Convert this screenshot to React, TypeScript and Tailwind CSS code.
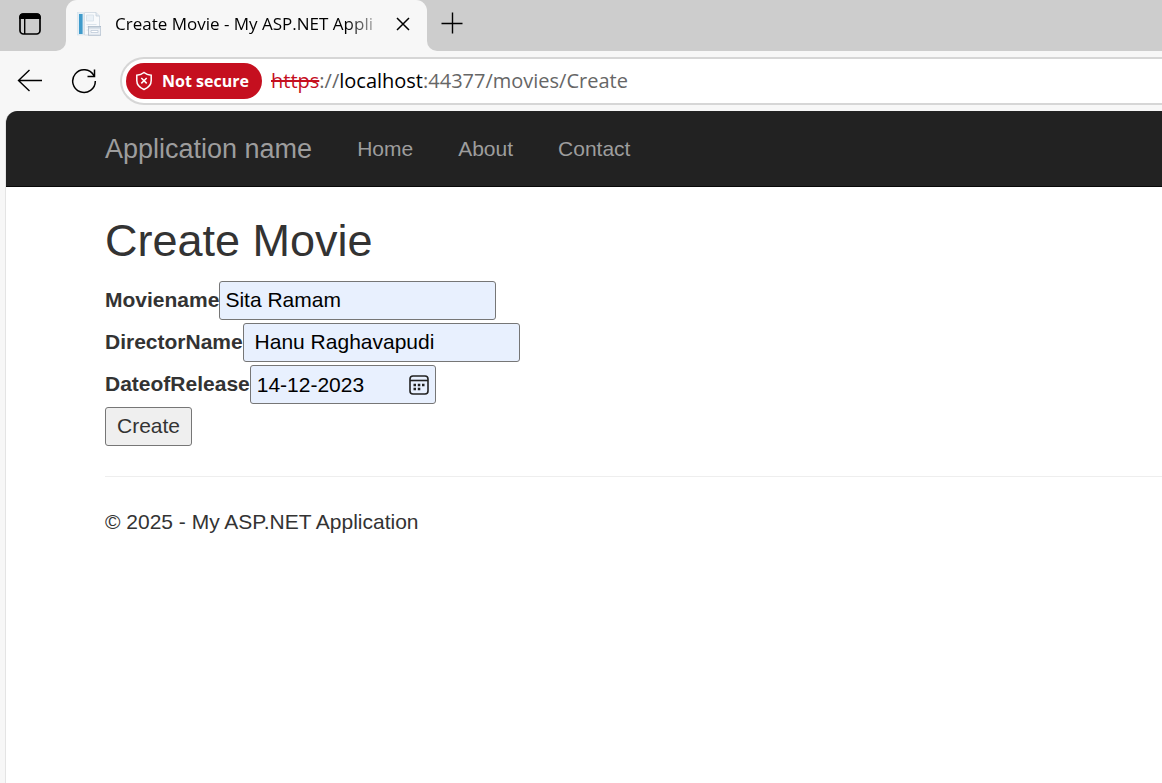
import React from "react";

const chromeFont = "font-['Segoe_UI','Open_Sans',sans-serif]";
const pageFont = "font-['Liberation_Sans',Arial,sans-serif]";

function TabBar() {
  return (
    <div className="flex h-[51px] bg-[#f7f7f7]">
      <div className="flex w-[66px] shrink-0 rounded-br-[10px] bg-[#cdcdcd]">
        <button aria-label="Tab actions" className="ml-[18px] mt-3 h-6 w-6">
          <svg viewBox="0 0 24 24" className="h-6 w-6">
            <rect x="2" y="2" width="20" height="20" rx="3.5" fill="none" stroke="#000" strokeWidth="1.7" />
            <path d="M1.200 7V5a3.800 3.800 0 0 1 3.800-3.800h14A3.800 3.800 0 0 1 22.800 5v2z" fill="#000" />
            <path d="M6.700 7v15" stroke="#000" strokeWidth="1.4" />
          </svg>
        </button>
      </div>
      <div className="shrink-0 bg-[linear-gradient(to_bottom,#cdcdcd_50%,#f7f7f7_50%)]">
        <div className="flex h-[51px] w-[361px] items-center rounded-t-[11px] bg-[#f7f7f7] pb-[3px] pl-[11px]">
          <svg viewBox="0 0 24 24" className="h-6 w-6 shrink-0">
            <rect x="0.500" y="0.500" width="6" height="22.500" fill="#e3eef6" stroke="#d3e1ec" strokeWidth="0.6" />
            <rect x="2" y="2" width="3.600" height="20" fill="#3f9bcb" />
            <path d="M7.500.500H19l3.500 3.500V23h-15z" fill="#f8fafc" stroke="#cdd7e1" strokeWidth="0.8" />
            <path d="M19 .500V4h3.500" fill="#e4ebf2" stroke="#c3cfdb" strokeWidth="0.8" />
            <path d="M9.500 3h7v6h-7zM9.500 12.500h10M9.500 15h2M9.500 18h2" fill="#eaf1f7" stroke="#dbe4ec" />
            <rect x="11.500" y="14.500" width="12.300" height="8.700" fill="#edf1f6" stroke="#a9b7c8" strokeWidth="0.8" />
            <path d="M11.900 15.800h11.500" stroke="#cbd5e0" strokeWidth="1.5" />
            <path d="M14 18.500h7v2h-7z" fill="#fff" stroke="#b7c4d4" strokeWidth="0.7" />
          </svg>
          <span className={`${chromeFont} ml-[14px] w-[275px] whitespace-nowrap text-[17px] leading-6 text-black [mask-image:linear-gradient(to_right,black_84%,transparent_99%)]`}>
            Create Movie - My ASP.NET Appli
          </span>
          <button aria-label="Close tab" className="ml-[5px]">
            <svg viewBox="0 0 16 16" className="h-4 w-4">
              <path d="M2 2l12 12M14 2L2 14" stroke="#000" strokeWidth="1.5" />
            </svg>
          </button>
        </div>
      </div>
      <div className="flex grow rounded-bl-[10px] bg-[#cdcdcd]">
        <button aria-label="New tab" className="ml-[14px] mt-3 h-[22px] w-[22px]">
          <svg viewBox="0 0 22 22" className="h-[22px] w-[22px]">
            <path d="M11.500 .500v21M.500 11.500h21" stroke="#000" strokeWidth="1.4" />
          </svg>
        </button>
      </div>
    </div>
  );
}

function Toolbar() {
  return (
    <div className="flex h-[60px] items-start bg-[#f7f7f7] pt-[6px]">
      <button aria-label="Back" className="ml-[17px] mt-[11px]">
        <svg viewBox="0 0 26 26" className="h-[26px] w-[26px]">
          <path d="M25 12.500H1.500M12.500 2L1.500 12.500l11 10.500" fill="none" stroke="#000" strokeWidth="1.4" />
        </svg>
      </button>
      <button aria-label="Refresh" className="ml-[28px] mt-[11px]">
        <svg viewBox="0 0 26 26" className="h-[26px] w-[26px]">
          <path d="M22.800 7.500A11.300 11.300 0 1 0 24.300 13M23.500 1.500V8.500H16.500" fill="none" stroke="#000" strokeWidth="1.5" />
        </svg>
      </button>
      <div className={`${chromeFont} ml-[23px] flex h-12 grow items-center rounded-l-full border-y-2 border-l-2 border-[#d6d6d6] bg-white pl-1`}>
        <button className="flex h-9 w-[136px] shrink-0 items-center rounded-full bg-[#c50f1f] pl-[9px] text-[16px] font-bold text-white">
          <svg viewBox="0 0 18 20" className="mr-[9px] h-5 w-[18px] shrink-0" fill="none" stroke="#fff" strokeWidth="1.5">
            <path d="M9 1.500c2 1.700 4.500 2.600 7.200 2.800v5.200c0 4.300-2.700 7.200-7.200 9-4.500-1.800-7.200-4.700-7.200-9V4.300C4.500 4.100 7 3.200 9 1.500z" />
            <path d="M6.300 7l5.400 5.400M11.700 7l-5.400 5.400" />
          </svg>
          <span className="whitespace-nowrap">Not secure</span>
        </button>
        <span className="ml-[9px] whitespace-nowrap text-[20px] text-[#666]">
          <span className="text-[#c50f1f] line-through decoration-2">https</span>://<span className="text-black">localhost</span>:44377/movies/Create
        </span>
      </div>
    </div>
  );
}

function Field({ id, label, children }: { id: string; label: string; children: React.ReactNode }) {
  return (
    <div className="flex h-[42px] items-start">
      <label htmlFor={id} className="pt-1 font-bold leading-[30px]">
        {label}
      </label>
      {children}
    </div>
  );
}

const boxStyle = "h-[39px] rounded-[3px] border border-[#767676] bg-[#e8f0fe] text-black outline-none";

export default function App() {
  return (
    <div className="flex min-h-screen flex-col bg-[#f7f7f7]">
      <TabBar />
      <Toolbar />
      <div className={`${pageFont} ml-[5px] flex grow flex-col overflow-hidden rounded-tl-[12px] border-l border-[#e4e4e4] bg-white text-[21px] text-[#333]`}>
        <nav className="flex h-[76px] items-center border-b border-[#080808] bg-[#222] pl-[99px] text-[#9d9d9d]">
          <a href="#" className="mr-[45px] text-[27px] leading-[42px]">Application name</a>
          <div className="flex gap-[45px]">
            <a href="#">Home</a>
            <a href="#">About</a>
            <a href="#">Contact</a>
          </div>
        </nav>
        <main className="pl-[99px] pt-[29px]">
          <h2 className="text-[45px] leading-[50px]">Create Movie</h2>
          <form className="pt-[15px]" onSubmit={(e) => e.preventDefault()}>
            <Field id="movie" label="Moviename">
              <input id="movie" type="text" defaultValue="Sita Ramam" className={`${boxStyle} w-[277px] pb-[2px] pl-[5px]`} />
            </Field>
            <Field id="director" label="DirectorName">
              <input id="director" type="text" defaultValue=" Hanu Raghavapudi" className={`${boxStyle} w-[277px] pb-[2px] pl-[5px]`} />
            </Field>
            <Field id="release" label="DateofRelease">
              <div className={`${boxStyle} flex w-[186px] items-center justify-between px-[6px]`}>
                <input id="release" type="text" defaultValue="14-12-2023" className="w-[130px] bg-transparent outline-none" />
                <button type="button" aria-label="Open calendar">
                  <svg viewBox="0 0 20 20" className="h-5 w-5" fill="none" stroke="#222" strokeWidth="1.6">
                    <rect x="1" y="1" width="18" height="18" rx="3" />
                    <path d="M1 5.500h18" />
                    <path d="M4.500 10h2.500M8.800 10h2.500M13 10h2.500M4.500 14h2.500M8.800 14h2.500" strokeWidth="2.4" />
                  </svg>
                </button>
              </div>
            </Field>
            <button type="submit" className="block h-[39px] w-[87px] rounded-[3px] border border-[#767676] bg-[#efefef] pb-[2px]">
              Create
            </button>
          </form>
          <hr className="mt-[30px] border-[#eee]" />
          <footer className="pt-[30px] leading-[30px]">© 2025 - My ASP.NET Application</footer>
        </main>
      </div>
    </div>
  );
}
